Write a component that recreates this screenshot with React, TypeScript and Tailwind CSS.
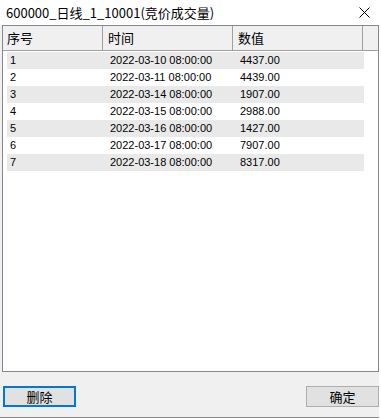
import React from "react";

const rows = [
  ["1", "2022-03-10 08:00:00", "4437.00"],
  ["2", "2022-03-11 08:00:00", "4439.00"],
  ["3", "2022-03-14 08:00:00", "1907.00"],
  ["4", "2022-03-15 08:00:00", "2988.00"],
  ["5", "2022-03-16 08:00:00", "1427.00"],
  ["6", "2022-03-17 08:00:00", "7907.00"],
  ["7", "2022-03-18 08:00:00", "8317.00"],
];

const cjk = { fontFamily: '"Noto Sans CJK SC", "Noto Sans", sans-serif' };
const latin = { fontFamily: '"Liberation Sans", Arial, sans-serif' };

export default function App() {
  return (
    <div className="w-[381px] h-[420px] bg-white overflow-hidden">
      <div className="w-[379px] h-[418px] bg-[#f0f0f0] border-b border-[#8a8a8a] flex flex-col">
        <div className="h-[25px] bg-white flex items-center justify-between pl-[6px] pr-[8px] shrink-0">
          <span className="text-[13px] leading-none text-black" style={cjk}>
            600000_日线_1_10001(竞价成交量)
          </span>
          <svg width="11" height="11" viewBox="0 0 11 11" className="mr-[1px]">
            <path d="M0.5 0.5 L10.5 10.5 M10.5 0.5 L0.5 10.5" stroke="#000" strokeWidth="1" />
          </svg>
        </div>
        <div className="ml-[2px] h-[347px] border border-[#828790] bg-white flex flex-col shrink-0">
          <div className="h-[25px] flex bg-[#f0f0f0] border-b border-[#a0a0a0] shrink-0">
            <div className="w-[100px] border-r border-[#a0a0a0] flex items-center pl-[4px] text-[13px] text-black" style={cjk}>序号</div>
            <div className="w-[130px] border-r border-[#a0a0a0] flex items-center pl-[5px] text-[13px] text-black" style={cjk}>时间</div>
            <div className="w-[130px] border-r border-[#a0a0a0] flex items-center pl-[5px] text-[13px] text-black" style={cjk}>数值</div>
            <div className="flex-1" />
          </div>
          <div className="ml-[4px] mt-[1px] w-[357px] flex flex-col">
            {rows.map((r, i) => (
              <div
                key={i}
                className={`h-[17px] flex items-center text-[11px] text-black ${i % 2 === 0 ? "bg-[#e9e9e9]" : "bg-white"}`}
                style={latin}
              >
                <div className="w-[100px] pl-[3px]">{r[0]}</div>
                <div className="w-[130px] pl-[3px]">{r[1]}</div>
                <div className="w-[120px] pl-[3px]">{r[2]}</div>
              </div>
            ))}
          </div>
        </div>
        <div className="flex justify-between mt-[14px] pl-[3px]">
          <div className="w-[73px] h-[21px] border-2 border-[#0078d7] bg-[#e1e1e1] flex items-center justify-center text-[13px] text-black" style={cjk}>
            删除
          </div>
          <div className="w-[73px] h-[21px] border border-[#adadad] bg-[#e1e1e1] flex items-center justify-center text-[13px] text-black" style={cjk}>
            确定
          </div>
        </div>
      </div>
    </div>
  );
}
